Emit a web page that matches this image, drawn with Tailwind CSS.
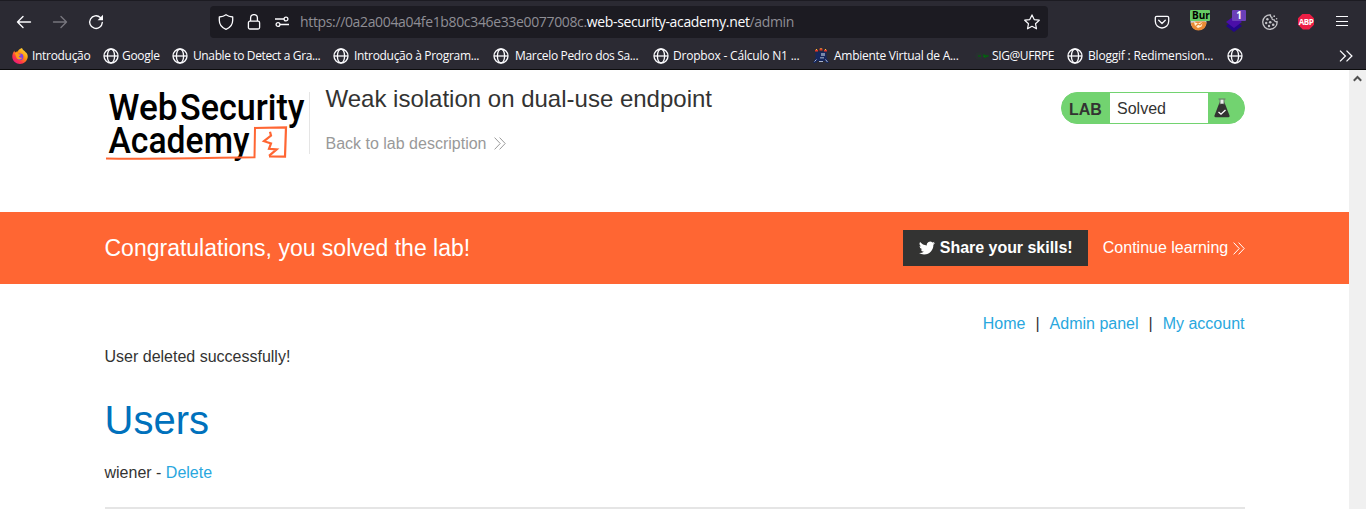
<!DOCTYPE html>
<html lang="en">
<head>
<meta charset="utf-8">
<title>Weak isolation on dual-use endpoint</title>
<script src="https://cdn.jsdelivr.net/npm/@tailwindcss/browser@4"></script>
</head>
<body class="h-[509px] w-[1366px] overflow-hidden bg-white font-['Liberation_Sans',Arial,sans-serif] text-base text-[#333332]">
<svg class="hidden">
  <symbol id="globe" viewBox="0 0 16 16"><g fill="none" stroke="#fbfbfe" stroke-width="1.3"><circle cx="8" cy="8" r="7"/><ellipse cx="8" cy="8" rx="3.6" ry="7"/><path d="M1 8h14"/></g></symbol>
  <symbol id="chev" viewBox="0 0 12 13"><path d="M.6.6l5.6 5.9-5.6 5.9M5.600.6l5.600 5.900-5.600 5.900" fill="none" stroke="currentColor" stroke-width="1"/></symbol>
</svg>

<header class="h-[70px] border-t border-b border-t-[#1c1b22] border-b-[#0c0c0d] bg-[#2b2a33] font-['Open_Sans','Noto_Sans',sans-serif] text-[#fbfbfe]">
  <div class="flex h-10 items-center pt-px">
    <svg class="ml-4 size-4 shrink-0" viewBox="0 0 16 16" fill="none" stroke="#fbfbfe" stroke-width="1.4" stroke-linecap="round" stroke-linejoin="round"><path d="M1.500 8h13M7 2.500L1.500 8 7 13.500"/></svg>
    <svg class="ml-5 size-4 shrink-0" viewBox="0 0 16 16" fill="none" stroke="#77767e" stroke-width="1.4" stroke-linecap="round" stroke-linejoin="round"><path d="M1.500 8h13M9 2.500l5.500 5.500L9 13.500"/></svg>
    <svg class="ml-5 size-4 shrink-0" viewBox="0 0 16 16"><path d="M14.300 8.500A6.300 6.300 0 1 1 12.300 3.500" fill="none" stroke="#fbfbfe" stroke-width="1.400" stroke-linecap="round"/><path d="M15 .8v5.400H9.600z" fill="#fbfbfe"/></svg>
    <div class="ml-[106px] flex h-8 w-[838px] shrink-0 items-center rounded bg-[#1c1b22]">
      <svg class="ml-2 size-4" viewBox="0 0 16 16" fill="none" stroke="#fbfbfe" stroke-width="1.300" stroke-linejoin="round"><path d="M8 .7C6.200 2 3.700 2.700 1.300 3v3.200c0 4.600 3 7.600 6.700 9.100 3.700-1.500 6.700-4.500 6.700-9.100V3C12.300 2.700 9.800 2 8 .7z"/></svg>
      <svg class="ml-3 size-4" viewBox="0 0 16 16" fill="none" stroke="#fbfbfe" stroke-width="1.300"><rect x="2.400" y="7.200" width="11.200" height="7.800" rx="1.500"/><path d="M4.600 7V4a3.400 3.400 0 0 1 6.800 0v3"/></svg>
      <svg class="ml-3 size-4" viewBox="0 0 16 16" fill="none" stroke="#fbfbfe" stroke-width="1.300"><path d="M1 5h9M6 10.500h9"/><circle cx="12" cy="5" r="1.900"/><circle cx="4" cy="10.500" r="1.900"/></svg>
      <div class="ml-[10px] pt-px text-sm leading-5 tracking-[-0.35px] whitespace-nowrap text-[#8f8e95]">https://0a2a004a04fe1b80c346e33e0077008c.<span class="text-[#fbfbfe]">web-security-academy.net</span>/admin</div>
      <svg class="mr-2 ml-auto size-4 shrink-0" viewBox="0 0 16 16" fill="none" stroke="#fbfbfe" stroke-width="1.200" stroke-linejoin="round"><path d="M8 .9l2.200 4.700 5.100.6-3.800 3.500 1 5.100L8 12.300l-4.500 2.500 1-5.100L.7 6.200l5.100-.6z"/></svg>
    </div>
    <svg class="ml-[106px] size-4 shrink-0" viewBox="0 0 16 16" fill="none" stroke="#fbfbfe" stroke-width="1.300" stroke-linecap="round" stroke-linejoin="round"><path d="M2.700 2.300h10.600c.8 0 1.400.6 1.400 1.400v3.600a6.700 6.700 0 0 1-13.400 0V3.700c0-.8.600-1.400 1.400-1.400zM4.700 6.300L8 9.500l3.300-3.200"/></svg>
    <div class="relative ml-5 h-[22px] w-5 shrink-0">
      <svg class="absolute top-0.5 left-0 size-[18px]" viewBox="0 0 18 18"><circle cx="8.500" cy="9" r="8" fill="#c9cdd3"/><path d="M1 9.500c2 1 3-1 5-1h9l1.500 1c0 5-4 8-8 8s-7.500-3-7.500-8z" fill="#e98a35"/><path d="M4 9l4 1.500 5-2-1.500 5-3.500 1.500-3-2z" fill="#fff1d5"/><path d="M5 14l3-3 2 1 3-3" stroke="#e98a35" stroke-width="1.300" fill="none"/></svg>
      <div class="absolute top-[-1px] left-0 h-[11px] w-5 overflow-hidden rounded-[1px] bg-[#66cc66] pl-0.5 font-['Open_Sans',sans-serif] text-[10px] leading-[11px] font-bold text-black">Burp</div>
    </div>
    <div class="relative ml-4 h-[22px] w-5 shrink-0">
      <svg class="absolute top-[5px] left-0 size-4" viewBox="0 0 16 16"><path d="M0 10l8-6 8 6-8 6z" fill="#23068a"/><path d="M0 6l8-6 8 6-8 6z" fill="#4a0ea8"/></svg>
      <div class="absolute top-[-1px] left-1.5 h-[11px] w-3.5 rounded-[1px] bg-[#6b3fb8] text-center font-['Open_Sans',sans-serif] text-[10px] leading-[11px] font-bold text-white">1</div>
    </div>
    <svg class="ml-4 size-4 shrink-0" viewBox="0 0 16 16"><path d="M8.500.9A7.200 7.200 0 1 0 15.100 7.500c-1.300.6-2.600 0-2.800-1.600-1.800.2-2.700-.9-2.300-2.400C8.800 3.200 8.300 2 8.500.9z" fill="none" stroke="#c4c4c8" stroke-width="1.300" stroke-linejoin="round"/><g fill="#c4c4c8"><circle cx="5.400" cy="5.300" r="1.200"/><circle cx="4.200" cy="9" r="1.200"/><circle cx="8.200" cy="8.200" r="1.300"/><circle cx="7" cy="12" r="1.200"/><circle cx="11.200" cy="10.800" r="1.300"/><circle cx="12.200" cy="2.200" r=".9"/><circle cx="14.600" cy="4.700" r=".8"/></g></svg>
    <div class="ml-5 flex size-4 shrink-0 items-center justify-center bg-[#ed1e45] font-['Open_Sans',sans-serif] text-[8px] leading-none font-bold tracking-[-0.4px] text-white [clip-path:polygon(30%_0,70%_0,100%_30%,100%_70%,70%_100%,30%_100%,0_70%,0_30%)]">ABP</div>
    <svg class="ml-5 size-4 shrink-0" viewBox="0 0 16 16" stroke="#fbfbfe" stroke-width="1.200"><path d="M2 2.500h12M2 7.500h12M2 11.500h12"/></svg>
  </div>
  <nav class="flex h-7 items-center pt-px text-xs leading-4 tracking-[-0.31px] whitespace-nowrap">
    <div class="ml-3 flex w-[91px] shrink-0 items-center gap-1">
      <svg class="size-4 shrink-0" viewBox="0 0 16 16"><defs><linearGradient id="ff" x1="1" y1="0" x2=".2" y2="1"><stop offset="0" stop-color="#fff44f"/><stop offset=".45" stop-color="#ff980e"/><stop offset=".75" stop-color="#ff3647"/><stop offset="1" stop-color="#e31587"/></linearGradient></defs><path d="M10 0c.5 2 2.300 2.500 3.600 4.200C15 5 16 7 15.700 9.300 15.200 13 12 16 8 16S.5 13 .3 9C.2 6.500 1 4.500 2.500 2.500c0 1 .2 1.400.6 1.900C4 3.500 5 3.400 5.700 3.500 6.400 1.800 7.500 1 10 0z" fill="url(#ff)"/><circle cx="8" cy="8.800" r="3.400" fill="#8040e8"/><path d="M2.700 5.300C4 4.400 6 5 6.800 6.300l2 .1c0 1-1.300 1.300-2 1.700.2 1.500 1.800 2 3.400 1.400-.7 2.300-4 2.700-5.500.7C3.800 9 4 7 2.700 5.300z" fill="#ff9a1a"/></svg>
      <span>Introdução</span></div>
    <div class="flex w-[69px] shrink-0 items-center gap-[3px]"><svg class="size-4 shrink-0"><use href="#globe"/></svg><span>Google</span></div>
    <div class="flex w-[161px] shrink-0 items-center gap-[5px]"><svg class="size-4 shrink-0"><use href="#globe"/></svg><span class="tracking-[-0.38px]">Unable to Detect a Gra...</span></div>
    <div class="flex w-40 shrink-0 items-center gap-[5px]"><svg class="size-4 shrink-0"><use href="#globe"/></svg><span>Introdução à Program...</span></div>
    <div class="flex w-40 shrink-0 items-center gap-[6px]"><svg class="size-4 shrink-0"><use href="#globe"/></svg><span class="tracking-[-0.33px]">Marcelo Pedro dos Sa...</span></div>
    <div class="flex w-40 shrink-0 items-center gap-1"><svg class="size-4 shrink-0"><use href="#globe"/></svg><span class="tracking-[-0.2px]">Dropbox - Cálculo N1 ...</span></div>
    <div class="flex w-40 shrink-0 items-center gap-[5px]">
      <svg class="size-4 shrink-0" viewBox="0 0 16 16"><path d="M2.500 3.500h11v6l2.500 5.500h-3l-1-2H4l-1 2H0l2.500-5z" fill="#16275c"/><path d="M8 5h4v3H8zM7 9h4v1.500H7z" fill="#7888a8"/><path d="M1.500 13.500l2-2M14.500 14l-2-2.500M6 13.500h4" stroke="#a9b4cc"/><path d="M2 2.700h3M6.500 1.500h3M11 2.700h3" stroke="#e23b2b" stroke-width="1.800"/><path d="M3 1.500h1M7.500.5h1M12 1.500h1" stroke="#f0c53a"/></svg>
      <span class="tracking-[-0.27px]">Ambiente Virtual de A...</span></div>
    <div class="flex w-[94px] shrink-0 items-center gap-[3px]"><svg class="size-4 shrink-0" viewBox="0 0 16 16"><circle cx="6" cy="8" r="4" fill="#292f31"/><path d="M5 8h3M10 7l5 1-4 1.500" fill="#087b12" stroke="#075a12" stroke-width="1.400"/></svg><span class="tracking-[-0.4px]">SIG@UFRPE</span></div>
    <div class="flex w-40 shrink-0 items-center gap-[5px]"><svg class="size-4 shrink-0"><use href="#globe"/></svg><span class="tracking-[-0.2px]">Bloggif : Redimension...</span></div>
    <svg class="size-4 shrink-0"><use href="#globe"/></svg>
    <svg class="mr-[13px] ml-auto h-3 w-[14px] shrink-0" viewBox="0 0 14 12" fill="none" stroke="#fbfbfe" stroke-width="1.300"><path d="M1 .6L6.400 6 1 11.400M7.500.6L12.900 6l-5.400 5.400"/></svg>
  </nav>
</header>

<div class="flex h-[439px]">
  <div class="w-[1349px] shrink-0">
    <div class="ml-[105px] flex h-[142px] w-[1140px]">
      <svg class="h-[92px] w-[204px] shrink-0 overflow-visible" viewBox="0 0 204 92">
        <g font-family="Roboto, sans-serif" font-weight="500" fill="#000">
          <text x="3.500" y="50.300" font-size="36.500" textLength="69" lengthAdjust="spacingAndGlyphs">Web</text>
          <text x="75" y="50.300" font-size="36.500" textLength="124.500" lengthAdjust="spacingAndGlyphs">Security</text>
          <text x="3.500" y="83" font-size="36.500" textLength="141" lengthAdjust="spacingAndGlyphs">Academy</text>
        </g>
        <g fill="none" stroke="#ff6633"><path d="M1 88.500C40 89.500 100 88 149.500 87.300L150 57.500" stroke-width="2"/><path d="M149 58l32-.7-1 29.300-16-.1" stroke-width="2.200"/><path d="M165 61.700l1 4-7 5.500 7 2.300-2 5.300 7.700.6-7.700 6.500" stroke-width="2.200"/></g>
      </svg>
      <div class="mt-[22px] h-[62px] border-l border-[#e5e5e5] pl-[15.5px]">
        <h2 class="mt-[-8px] text-2xl leading-[30px]">Weak isolation on dual-use endpoint</h2>
        <a class="mt-5 flex items-center gap-2 leading-5 text-[#999999]">Back to lab description<svg class="mb-px h-[13px] w-3"><use href="#chev"/></svg></a>
      </div>
      <div class="mt-[22px] ml-auto flex h-8 w-[184px] overflow-hidden rounded-full border border-[#72d370] bg-[#72d370]">
        <div class="w-12 pl-[7px] leading-[33px] font-bold">LAB</div>
        <div class="w-[98px] bg-white pl-[7px] leading-[31px]">Solved</div>
        <svg class="mt-[5px] ml-[5px] h-5 w-[18px]" viewBox="0 0 18 20"><path d="M6.500 4.500L1.500 17.500q-.5 1.700 1 1.700h13q1.500 0 1-1.700L11.500 4.500z" fill="#333332"/><path d="M7 1.500h4v4.300H7z" fill="#e9eee9"/><path d="M5.500 1h7M7 1v5.500M11 1v5.500" stroke="#6a776a" stroke-width="1" fill="none"/><path d="M5.500 14l2.500 2.200 4.500-4.200" stroke="#fff" stroke-width="1.300" fill="none"/></svg>
      </div>
    </div>

    <div class="h-[72px] bg-[#ff6633]">
      <div class="ml-[105px] flex h-full w-[1140px] items-center text-white">
        <p class="-ml-[0.500px] text-[23px] leading-8">Congratulations, you solved the lab!</p>
        <a class="ml-auto flex h-9 w-[185px] items-center gap-[5px] bg-[#333332] pl-4 font-bold whitespace-nowrap"><svg class="h-[14px] w-4 shrink-0" viewBox="0 2 24 20" fill="#fff"><path d="M23.950 4.570a10 10 0 0 1-2.820.770 4.960 4.960 0 0 0 2.160-2.720c-.950.550-2 .950-3.130 1.180a4.920 4.920 0 0 0-8.380 4.480C7.690 8.090 4.070 6.130 1.640 3.160a4.920 4.920 0 0 0 1.520 6.570 4.900 4.900 0 0 1-2.230-.610v.060a4.920 4.920 0 0 0 3.950 4.830 5 5 0 0 1-2.210.080 4.940 4.940 0 0 0 4.600 3.420A9.870 9.870 0 0 1 0 19.540a13.990 13.990 0 0 0 7.550 2.210c9.050 0 14-7.500 14-13.980 0-.210 0-.420-.020-.630a9.940 9.940 0 0 0 2.420-2.570z"/></svg><span class="tracking-[-0.03px]">Share your skills!</span></a>
        <a class="ml-[15px] flex items-center gap-[4.800px]">Continue learning<svg class="h-[13px] w-3"><use href="#chev"/></svg></a>
      </div>
    </div>

    <main class="ml-[104.500px] w-[1140px]">
      <nav class="flex justify-end gap-[10px] pt-[30px] leading-5 text-[#29a7de]"><a>Home</a><span class="text-[#333332]">|</span><a>Admin panel</a><span class="text-[#333332]">|</span><a>My account</a></nav>
      <p class="mt-[13px] leading-5">User deleted successfully!</p>
      <h1 class="mt-[27px] text-[40px] leading-[52px] text-[#0071bc]">Users</h1>
      <p class="mt-[17px] leading-5">wiener - <a class="text-[#29a7de]">Delete</a></p>
      <hr class="mt-[24px] border-t-2 border-[#e5e5e5]">
    </main>
  </div>
  <div class="flex w-[17px] shrink-0 justify-center bg-[#f0f0f0] pt-[5px]"><svg class="h-[7px] w-[9px]" viewBox="0 0 9 7" fill="none" stroke="#505050" stroke-width="2"><path d="M.8 5.700L4.500 2l3.700 3.700"/></svg></div>
</div>
</body>
</html>
